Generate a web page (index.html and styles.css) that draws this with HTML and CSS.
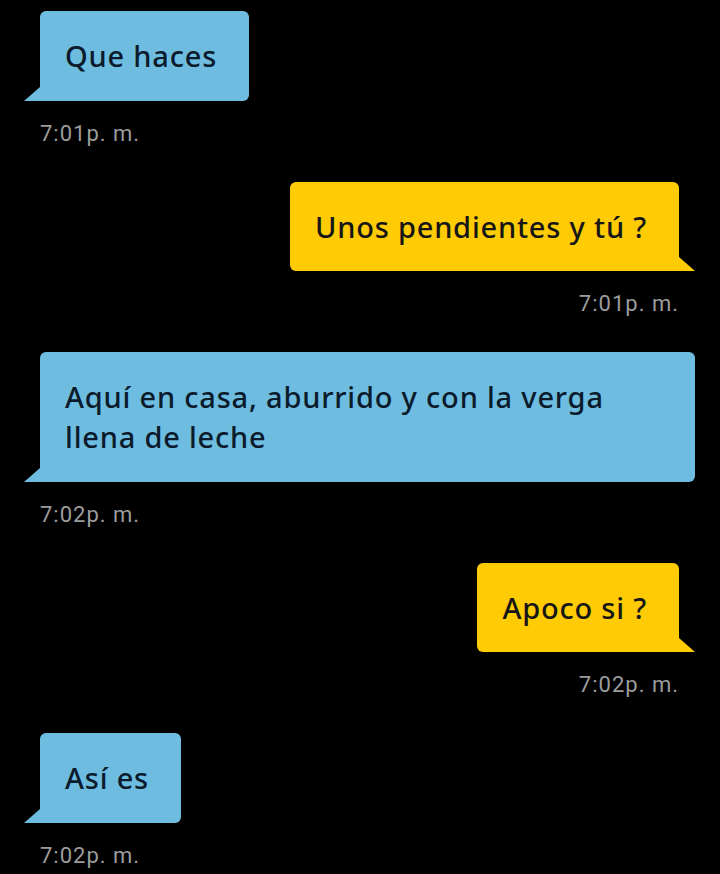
FILE: index.html
```html
<!DOCTYPE html>
<html lang="es">

<head>
    <meta charset="UTF-8">
    <meta name="viewport" content="width=device-width, initial-scale=1.0">
    <title>Chat</title>
    <link rel="stylesheet" href="styles.css">
</head>

<body>
    <div class="chat">
        <div class="msg entrante">
            <div class="burbuja">Que haces</div>
            <div class="hora">7:01p. m.</div>
        </div>

        <div class="msg saliente">
            <div class="burbuja">Unos pendientes y tú ?</div>
            <div class="hora">7:01p. m.</div>
        </div>

        <div class="msg entrante">
            <div class="burbuja">Aquí en casa, aburrido y con la verga llena de leche</div>
            <div class="hora">7:02p. m.</div>
        </div>

        <div class="msg saliente">
            <div class="burbuja">Apoco si ?</div>
            <div class="hora">7:02p. m.</div>
        </div>

        <div class="msg entrante">
            <div class="burbuja">Así es</div>
            <div class="hora">7:02p. m.</div>
        </div>
    </div>
</body>

</html>
```

FILE: styles.css
```css
html,
body {
    background-color: #000;
}

body {
    margin: 0;
    font-family: "Noto Sans", sans-serif;
}

.chat {
    display: flex;
    flex-direction: column;
    padding: 11px 0 0;
}

.msg {
    display: flex;
    flex-direction: column;
    margin-bottom: 36px;
}

.entrante {
    align-items: flex-start;
    padding: 0 25px 0 40px;
}

.saliente {
    align-items: flex-end;
    padding: 0 41px 0 25px;
}

.burbuja {
    position: relative;
    padding: 25px 32px 24.5px 25px;
    font-size: 29px;
    font-weight: 500;
    letter-spacing: 0.8px;
    line-height: 40px;
    border-radius: 6px;
}

.entrante .burbuja {
    background-color: #6ebde1;
    color: #0b1b2b;
    border-bottom-left-radius: 0;
}

.saliente .burbuja {
    background-color: #ffcb05;
    color: #161616;
    border-bottom-right-radius: 0;
}

/* colita de la burbuja */
.burbuja::after {
    content: "";
    position: absolute;
    bottom: 0;
    width: 0;
    height: 0;
    border-bottom: 14px solid;
}

.entrante .burbuja::after {
    left: -16px;
    border-left: 16px solid transparent;
    border-bottom-color: #6ebde1;
}

.saliente .burbuja::after {
    right: -16px;
    border-right: 16px solid transparent;
    border-bottom-color: #ffcb05;
}

.hora {
    margin-top: 21px;
    font-family: Roboto, sans-serif;
    font-size: 22px;
    letter-spacing: 1px;
    line-height: 24px;
    color: #9c9c9c;
}
```
